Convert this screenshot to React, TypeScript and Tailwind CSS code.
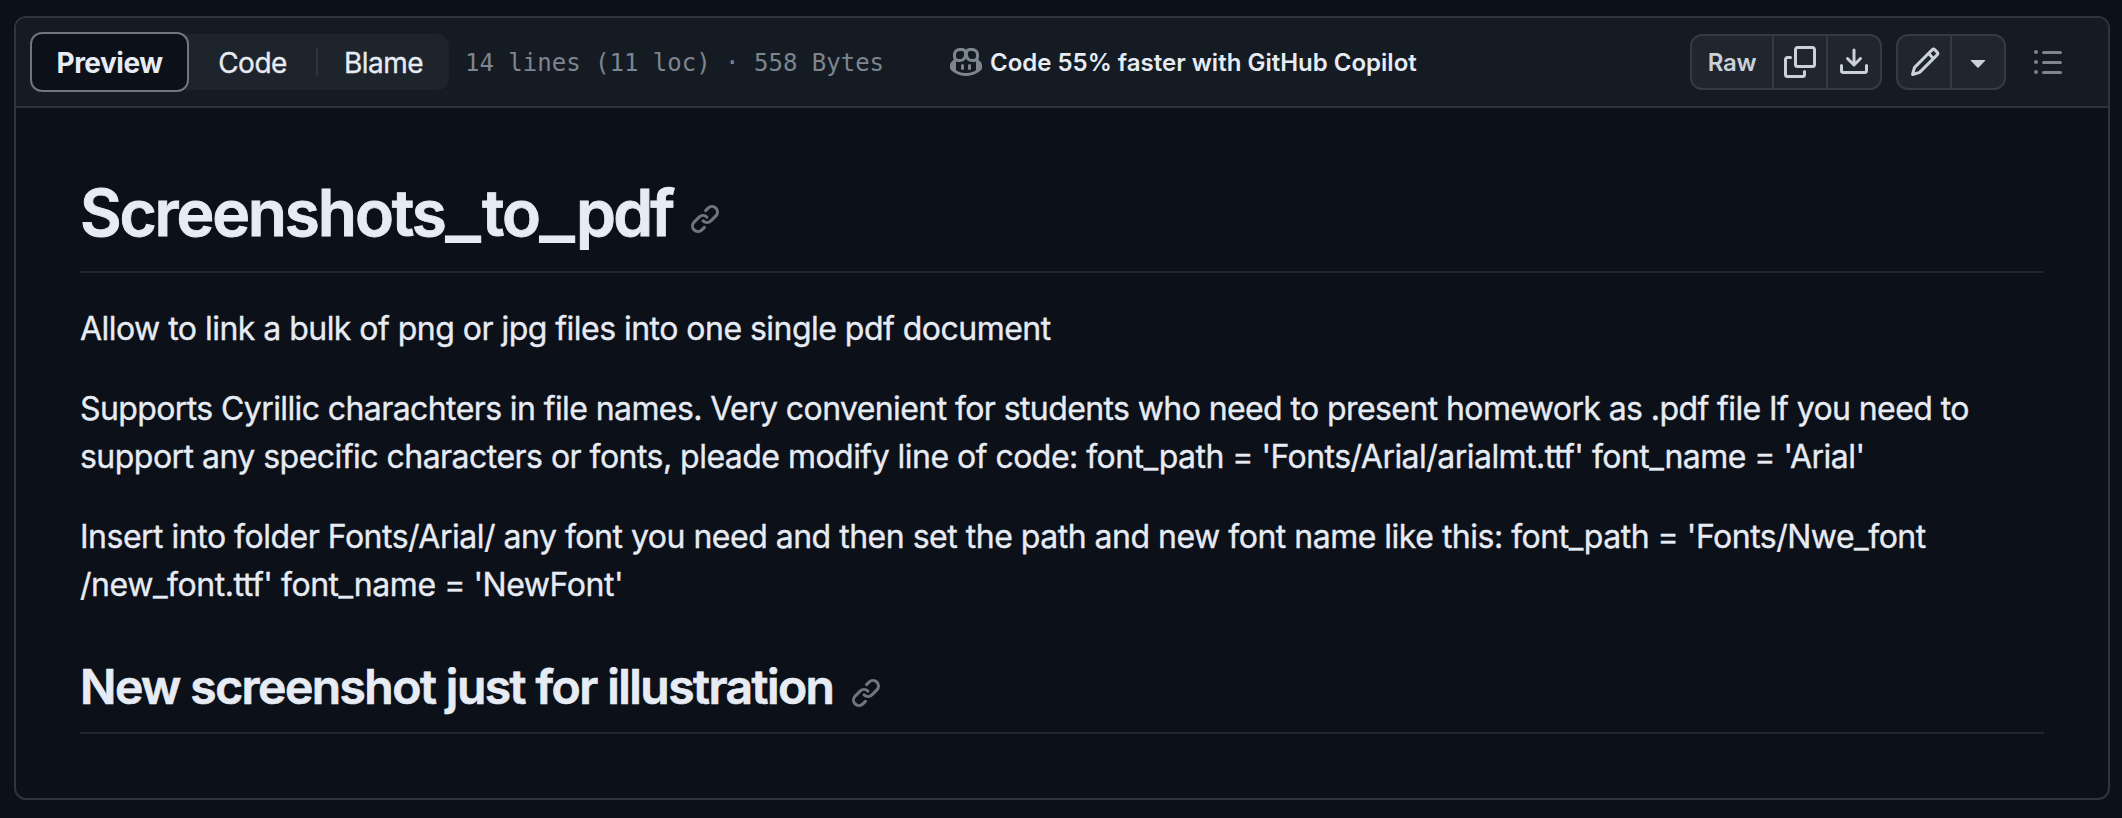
import React from "react";

type IconProps = { paths: string[]; className?: string };

function Icon({ paths, className = "" }: IconProps) {
  return (
    <svg viewBox="0 0 16 16" fill="currentColor" className={`size-8 shrink-0 ${className}`} aria-hidden="true">
      {paths.map((d) => (
        <path key={d} d={d} />
      ))}
    </svg>
  );
}

const copilot = [
  "M7.998 15.035c-4.562 0-7.873-2.914-7.998-3.749V9.338c.085-.628.677-1.686 1.588-2.065.013-.07.024-.143.036-.218.029-.183.06-.384.126-.612-.201-.508-.254-1.084-.254-1.656 0-.87.128-1.769.693-2.484.579-.733 1.494-1.124 2.724-1.261 1.206-.134 2.262.034 2.944.765.05.053.096.108.139.165.044-.057.094-.112.143-.165.682-.731 1.738-.899 2.944-.765 1.23.137 2.145.528 2.724 1.261.566.715.693 1.614.693 2.484 0 .572-.053 1.148-.254 1.656.066.228.098.429.126.612.012.076.024.148.037.218.924.385 1.522 1.471 1.591 2.095v1.872c0 .766-3.351 3.795-8.002 3.795Zm0-1.485c2.28 0 4.584-1.11 5.002-1.433V7.862l-.023-.116c-.49.21-1.075.291-1.727.291-1.146 0-2.059-.327-2.71-.991A3.222 3.222 0 0 1 8 6.303a3.24 3.24 0 0 1-.544.743c-.65.664-1.563.991-2.71.991-.652 0-1.236-.081-1.727-.291l-.023.116v4.255c.419.323 2.722 1.433 5.002 1.433ZM6.762 2.83c-.193-.206-.637-.413-1.682-.297-1.019.113-1.479.404-1.713.7-.247.312-.369.789-.369 1.554 0 .793.129 1.171.308 1.371.162.181.519.379 1.442.379.853 0 1.339-.235 1.638-.54.315-.322.527-.827.617-1.553.117-.935-.037-1.395-.241-1.614Zm4.155-.297c-1.044-.116-1.488.091-1.681.297-.204.219-.359.679-.242 1.614.091.726.303 1.231.618 1.553.299.305.784.54 1.638.54.922 0 1.28-.198 1.442-.379.179-.2.308-.578.308-1.371 0-.765-.123-1.242-.37-1.554-.233-.296-.693-.587-1.713-.7Z",
  "M6.25 9.037a.75.75 0 0 1 .75.75v1.501a.75.75 0 0 1-1.5 0V9.787a.75.75 0 0 1 .75-.75Zm4.25.75v1.501a.75.75 0 0 1-1.5 0V9.787a.75.75 0 0 1 1.5 0Z",
];
const copy = [
  "M0 6.75C0 5.784.784 5 1.75 5h1.5a.75.75 0 0 1 0 1.5h-1.5a.25.25 0 0 0-.25.25v7.5c0 .138.112.25.25.25h7.5a.25.25 0 0 0 .25-.25v-1.5a.75.75 0 0 1 1.5 0v1.5A1.75 1.75 0 0 1 9.25 16h-7.5A1.75 1.75 0 0 1 0 14.25Z",
  "M5 1.75C5 .784 5.784 0 6.75 0h7.5C15.216 0 16 .784 16 1.75v7.5A1.75 1.75 0 0 1 14.25 11h-7.5A1.75 1.75 0 0 1 5 9.25Zm1.75-.25a.25.25 0 0 0-.25.25v7.5c0 .138.112.25.25.25h7.5a.25.25 0 0 0 .25-.25v-7.5a.25.25 0 0 0-.25-.25Z",
];
const download = [
  "M2.75 14A1.75 1.75 0 0 1 1 12.25v-2.5a.75.75 0 0 1 1.5 0v2.5c0 .138.112.25.25.25h10.5a.25.25 0 0 0 .25-.25v-2.5a.75.75 0 0 1 1.5 0v2.5A1.75 1.75 0 0 1 13.25 14Z",
  "M7.25 7.689V2a.75.75 0 0 1 1.5 0v5.689l1.97-1.969a.749.749 0 1 1 1.06 1.06l-3.25 3.25a.749.749 0 0 1-1.06 0L4.22 6.78a.749.749 0 1 1 1.06-1.06l1.97 1.969Z",
];
const pencil = [
  "M11.013 1.427a1.75 1.75 0 0 1 2.474 0l1.086 1.086a1.75 1.75 0 0 1 0 2.474l-8.61 8.61c-.21.21-.47.364-.756.445l-3.251.93a.75.75 0 0 1-.927-.928l.929-3.25c.081-.286.235-.547.445-.758l8.61-8.61Zm.176 4.823L9.75 4.81l-6.286 6.287a.253.253 0 0 0-.064.108l-.558 1.953 1.953-.558a.253.253 0 0 0 .108-.064Zm1.238-3.763a.25.25 0 0 0-.354 0L10.811 3.75l1.439 1.44 1.263-1.263a.25.25 0 0 0 0-.354Z",
];
const triangleDown = [
  "m4.427 7.427 3.396 3.396a.25.25 0 0 0 .354 0l3.396-3.396A.25.25 0 0 0 11.396 7H4.604a.25.25 0 0 0-.177.427Z",
];
const list = [
  "M5.75 2.5h8.5a.75.75 0 0 1 0 1.5h-8.5a.75.75 0 0 1 0-1.5Zm0 5h8.5a.75.75 0 0 1 0 1.5h-8.5a.75.75 0 0 1 0-1.5Zm0 5h8.5a.75.75 0 0 1 0 1.5h-8.5a.75.75 0 0 1 0-1.5ZM2 14a1 1 0 1 1 0-2 1 1 0 0 1 0 2Zm1-6a1 1 0 1 1-2 0 1 1 0 0 1 2 0ZM2 4a1 1 0 1 1 0-2 1 1 0 0 1 0 2Z",
];
const link = [
  "m7.775 3.275 1.25-1.25a3.5 3.5 0 1 1 4.95 4.95l-2.5 2.5a3.5 3.5 0 0 1-4.95 0 .751.751 0 0 1 .018-1.042.751.751 0 0 1 1.042-.018 1.998 1.998 0 0 0 2.83 0l2.5-2.5a2.002 2.002 0 0 0-2.83-2.83l-1.25 1.25a.751.751 0 0 1-1.042-.018.751.751 0 0 1-.018-1.042Zm-4.69 9.64a1.998 1.998 0 0 0 2.83 0l1.25-1.25a.751.751 0 0 1 1.042.018.751.751 0 0 1 .018 1.042l-1.25 1.25a3.5 3.5 0 1 1-4.95-4.95l2.5-2.5a3.5 3.5 0 0 1 4.95 0 .751.751 0 0 1-.018 1.042.751.751 0 0 1-1.042.018 1.998 1.998 0 0 0-2.83 0l-2.5 2.5a1.998 1.998 0 0 0 0 2.83Z",
];

function Toolbar() {
  return (
    <header className="flex h-[90px] shrink-0 items-center border-b-2 border-[#30353d] bg-[#151b23] pl-3.5">
      <div className="flex h-14 w-[419px] items-center rounded-xl bg-[#1e242b] text-[28px]">
        <button className="flex h-[60px] w-[159px] shrink-0 items-center justify-center rounded-xl border-2 border-[#6e7681] bg-[#0c1018] pt-0.5 font-bold tracking-[-0.5px]">
          Preview
        </button>
        <button className="flex w-[127px] items-center justify-center pt-0.5 tracking-[-0.5px] [-webkit-text-stroke:0.3px]">Code</button>
        <span className="h-7 w-0.5 bg-[#30353d]" />
        <button className="flex flex-1 items-center justify-center pt-0.5 tracking-[-0.5px] [-webkit-text-stroke:0.3px]">Blame</button>
      </div>
      <span className="ml-4 w-[485px] whitespace-pre pt-0.5 font-['DejaVu_Sans_Mono',monospace] text-[24px] text-[#7d8590]">
        14 lines (11 loc) · 558 Bytes
      </span>
      <a className="flex items-center gap-2 whitespace-nowrap text-[24px] font-semibold">
        <Icon paths={copilot} className="text-[#7d8590]" />
        <span className="pt-0.5">Code 55% faster with GitHub Copilot</span>
      </a>
      <div className="ml-auto flex items-center pr-[44px] text-[#c9d1d9]">
        <div className="flex h-14 w-48 divide-x-2 divide-[#363b43] rounded-xl border-2 border-[#363b43] bg-[#20262d]">
          <button className="flex w-[82px] items-center justify-center pt-0.5 text-[24px] font-semibold tracking-[-0.3px]">Raw</button>
          <button className="flex w-[54px] items-center justify-center"><Icon paths={copy} /></button>
          <button className="flex flex-1 items-center justify-center"><Icon paths={download} /></button>
        </div>
        <div className="ml-3.5 flex h-14 w-[110px] divide-x-2 divide-[#363b43] rounded-xl border-2 border-[#363b43] bg-[#20262d]">
          <button className="flex w-[54px] items-center justify-center pl-0.5"><Icon paths={pencil} /></button>
          <button className="flex flex-1 items-center justify-center"><Icon paths={triangleDown} /></button>
        </div>
        <button className="ml-[26px]"><Icon paths={list} className="text-[#7d8590]" /></button>
      </div>
    </header>
  );
}

export default function App() {
  return (
    <div className="h-[818px] w-[2122px] bg-[#0c1018] pl-3.5 pt-4 font-['Inter','Liberation_Sans',sans-serif] text-[#e6ebf4]">
      <main className="flex h-[784px] w-[2096px] flex-col overflow-hidden rounded-xl border-2 border-[#30353d]">
        <Toolbar />
        <article className="px-16 pt-16 text-[32px] leading-[48px] [-webkit-text-stroke:0.35px]">
          <h1 className="mb-8 flex h-[101px] items-start border-b-2 border-[#21262d] text-[64px] font-semibold leading-[82px] [-webkit-text-stroke:0.9px]">
            <span className="w-[364px] tracking-[-2.15px]">Screenshots</span>
            <span className="flex w-[38px] scale-x-[1.17] justify-center">_</span>
            <span className="w-[56px] tracking-[-2px]">to</span>
            <span className="flex w-[38px] scale-x-[1.17] justify-center">_</span>
            <span className="w-[96px] tracking-[-2.8px]">pdf</span>
            <Icon paths={link} className="ml-[17px] mt-[31px] text-[#6e7681]" />
          </h1>
          <p className="mb-8 whitespace-nowrap">
            <span className="tracking-[-0.53px]">Allow to link a bulk of png or jpg files into one single pdf document</span>
          </p>
          <p className="mb-8 whitespace-nowrap">
            <span className="tracking-[-0.597px]">Supports Cyrillic charachters in file names. Very convenient for students who need to present homework as .pdf file If you need to</span>
            <br />
            <span className="tracking-[-0.53px]">support any specific characters or fonts, pleade modify line of code: font_path = 'Fonts/Arial/arialmt.ttf' font_name = 'Arial'</span>
          </p>
          <p className="mb-12 whitespace-nowrap">
            <span className="tracking-[-0.495px]">Insert into folder Fonts/Arial/ any font you need and then set the path and new font name like this: font_path = 'Fonts/Nwe_font</span>
            <br />
            <span className="tracking-[-0.455px]">/new_font.ttf' font_name = 'NewFont'</span>
          </p>
          <h2 className="flex h-[77px] items-start border-b-2 border-[#21262d] text-[48px] font-semibold leading-[60px] [-webkit-text-stroke:0.7px]">
            <span className="tracking-[-1.54px]">New screenshot just for illustration</span>
            <Icon paths={link} className="ml-[17px] mt-5 text-[#6e7681]" />
          </h2>
        </article>
      </main>
    </div>
  );
}
